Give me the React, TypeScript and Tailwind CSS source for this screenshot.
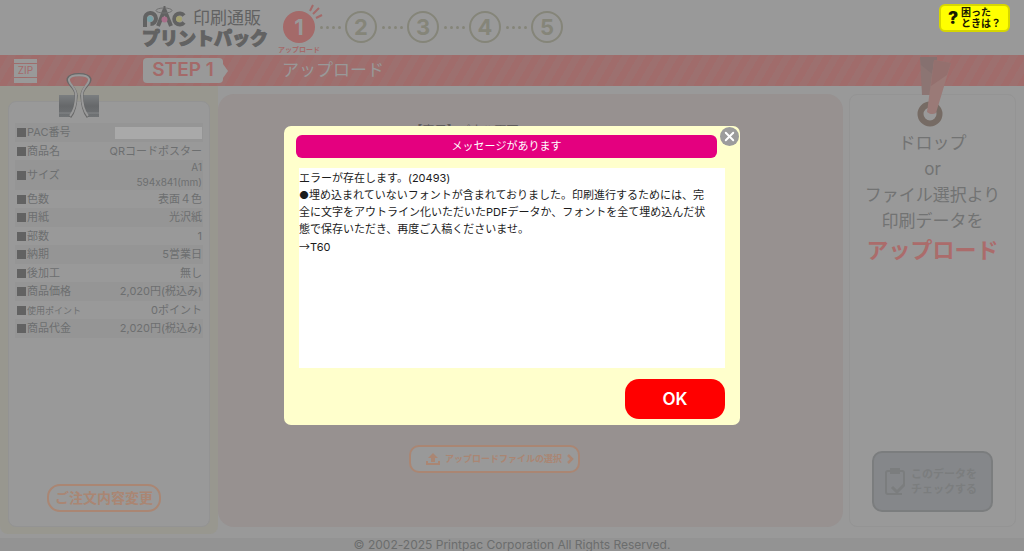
import { useState } from 'react'
import clsx from 'clsx'
import { X } from 'lucide-react'

type OrderRow = { label: string; value: string[]; small?: 'label' | 'value'; masked?: boolean }

const ORDER: OrderRow[] = [
  { label: 'PAC番号', value: [], masked: true },
  { label: '商品名', value: ['QRコードポスター'] },
  { label: 'サイズ', value: ['A1', '594x841(mm)'], small: 'value' },
  { label: '色数', value: ['表面４色'] },
  { label: '用紙', value: ['光沢紙'] },
  { label: '部数', value: ['1'] },
  { label: '納期', value: ['5営業日'] },
  { label: '後加工', value: ['無し'] },
  { label: '商品価格', value: ['2,020円(税込み)'] },
  { label: '使用ポイント', value: ['0ポイント'], small: 'label' },
  { label: '商品代金', value: ['2,020円(税込み)'] },
]

const MESSAGE = [
  'エラーが存在します。(20493)',
  '●埋め込まれていないフォントが含まれておりました。印刷進行するためには、完全に文字をアウトライン化いただいたPDFデータか、フォントを全て埋め込んだ状態で保存いただき、再度ご入稿くださいませ。',
]

function Logo() {
  return (
    <a href="#" aria-label="プリントパック" className="block w-[126px] pt-[6px] text-[#626262]">
      <span className="flex h-[22px] items-end gap-[7px]">
        <svg viewBox="0 0 44 22" className="h-[22px] w-[44px]" fill="none">
          <path d="M3 21V13a5.500 5.500 0 1 1 5.500 5" stroke="#626262" strokeWidth="4" />
          <path d="M16 20 22.500 4 29 20" stroke="#626262" strokeWidth="4" strokeLinejoin="round" />
          <ellipse cx="22" cy="4.500" rx="8" ry="2.500" stroke="#717171" />
          <path d="M22.500 0v5" stroke="#626262" strokeWidth="2" />
          <path d="M42 9.500a5.500 5.500 0 1 0 0 7" stroke="#626262" strokeWidth="4" />
          <circle cx="8" cy="13" r="3" fill="#78a0a6" />
          <circle cx="22.500" cy="13.500" r="3" fill="#a8708a" />
          <circle cx="37" cy="13" r="3" fill="#a3a070" />
        </svg>
        <span className="text-[17px] leading-[20px]">印刷通販</span>
      </span>
      <span className="block text-[18px] leading-[21px] font-black [-webkit-text-stroke:1px_#626262]">
        プリントパック
      </span>
    </a>
  )
}

function Steps() {
  return (
    <ol className="ml-[15px] flex pt-[11px]">
      {[1, 2, 3, 4, 5].map((n) => (
        <li key={n} className="flex">
          <span className="relative">
            <span
              className={clsx(
                'flex size-8 items-center justify-center rounded-full text-[22px] leading-none font-bold',
                n === 1 ? 'bg-[#a46a69] text-[#999999]' : 'border-2 border-[#858579] text-[#858579]',
              )}
            >
              {n}
            </span>
            {n === 1 && (
              <>
                <svg viewBox="0 0 16 16" className="absolute -top-[7px] left-[25px] size-4" stroke="#a46a69" strokeWidth="2">
                  <path d="M2 7 5 1M5 10 11 4M8 14 14 11" />
                </svg>
                <span className="absolute top-[34px] left-1/2 -translate-x-1/2 text-[7px] leading-[10px] font-bold whitespace-nowrap text-[#a46a69]">
                  アップロード
                </span>
              </>
            )}
          </span>
          {n < 5 && (
            <span className="flex w-[30px] items-center justify-center gap-[3px]">
              {[0, 1, 2, 3].map((d) => (
                <i key={d} className="size-[3px] rounded-full bg-[#858579]" />
              ))}
            </span>
          )}
        </li>
      ))}
    </ol>
  )
}

function StepBar() {
  return (
    <div className="flex h-[31px] items-center bg-[repeating-linear-gradient(120deg,#a06c6b_0px,#a06c6b_7px,#9d706f_7px,#9d706f_14px)]">
      <div className="ml-[14px] flex h-6 w-[23px] flex-col gap-px">
        <i className="h-[4px] bg-[#999999]" />
        <span className="bg-[#999999] text-center text-[10px] leading-[13px] text-[#a46a69]">ZIP</span>
        <i className="h-[5px] bg-[#999999]" />
      </div>
      <div className="ml-[106px] flex items-center">
        <span className="flex h-[25px] w-[80px] items-center justify-center rounded bg-[#999999] text-[19px] font-semibold text-[#a46a69]">
          STEP 1
        </span>
        <svg viewBox="0 0 5 14" className="h-[14px] w-[5px]" fill="#999999">
          <path d="M0 0 5 7 0 14z" />
        </svg>
      </div>
      <h1 className="ml-[54px] text-[17px] text-[#999999]">アップロード</h1>
    </div>
  )
}

function BinderClip() {
  return (
    <svg viewBox="0 0 40 46" className="absolute -top-[29px] left-[50px] h-[46px] w-[40px]" fill="none">
      <defs>
        <linearGradient id="clip" x1="0" y1="0" x2="0" y2="1">
          <stop offset="0" stopColor="#7b7e80" />
          <stop offset="0.500" stopColor="#66686a" />
          <stop offset="1" stopColor="#707375" />
        </linearGradient>
      </defs>
      <path d="M0 22h40v22H28L23 32 21 22h-2l-2 10-5 12H0z" fill="url(#clip)" />
      <path d="M0 40h13M27 40h13" stroke="#858789" strokeWidth="1" />
      <path d="M11 44C16 38 17 30 17 22 17 14 8 11 9 6c2-6 20-6 22 0 1 5-8 8-8 16 0 8 1 16 6 22" stroke="#686868" strokeWidth="3" />
      <path d="M11 43C16 37 17 30 17 22 17 14 9 11 10 6c2-5 18-5 20 0 1 5-7 8-7 16 0 8 1 15 6 21" stroke="#999999" strokeWidth="2" />
    </svg>
  )
}

function OrderPanel() {
  return (
    <aside className="mb-1 rounded-b-lg bg-[#98978f] px-2 pt-[15px] pb-[7px]">
      <div className="relative flex h-full flex-col rounded-lg border border-[#939393] bg-[#999999] px-[6px] pt-[21px] pb-[14px]">
        <BinderClip />
        <table className="w-full text-[11px] leading-[15px] text-[#6d6f70]">
          <tbody>
            {ORDER.map((row) => (
              <tr key={row.label} className="h-[18px] odd:h-[19px] odd:bg-[#959595]">
                <th scope="row" className="pl-[2px] text-left font-normal whitespace-nowrap">
                  <span className="flex items-center gap-px">
                    <i className="size-[9px] bg-[#626262]" />
                    <span className={clsx(row.small === 'label' && 'text-[9px]')}>{row.label}</span>
                  </span>
                </th>
                <td className={clsx('pr-px text-right whitespace-nowrap', row.small === 'value' && 'text-[10px]')}>
                  {row.masked && <span className="ml-auto block h-3 w-[87px] bg-[#a9a9a9]" />}
                  {row.value.map((line) => (
                    <div key={line}>{line}</div>
                  ))}
                </td>
              </tr>
            ))}
          </tbody>
        </table>
        <button className="mt-auto ml-8 h-7 w-[114px] rounded-[13px] border-2 border-[#aa8673] text-[14px] leading-none font-bold whitespace-nowrap text-[#aa8673]">
          ご注文内容変更
        </button>
      </div>
    </aside>
  )
}

function UploadPanel() {
  return (
    <section className="pt-2 pb-[11px]">
      <div className="flex h-full flex-col items-center rounded-2xl bg-[#979190] pt-[29px] pr-[72px] pb-[54px]">
        <h2 className="mr-[60px] text-[12px] leading-[16px] text-[#5f5c5c]">【専用】パネル画面</h2>
        <button className="mt-auto flex h-7 w-[171px] items-center justify-end gap-[5px] rounded-[10px] border-2 border-[#aa8673] bg-[#999999] pr-1 text-[9px] font-bold whitespace-nowrap text-[#aa8673]">
          <svg viewBox="0 0 14 12" className="h-3 w-[14px]" fill="#aa8673">
            <path d="M7 0 12 5H9v4H5V5H2zM0 8h2v2h10V8h2v4H0z" />
          </svg>
          アップロードファイルの選択
          <svg viewBox="0 0 7 10" className="h-[10px] w-[7px]" fill="none" stroke="#aa8673" strokeWidth="2.500">
            <path d="m1 1 4 4-4 4" />
          </svg>
        </button>
      </div>
    </section>
  )
}

function DropPanel() {
  return (
    <section className="pt-2 pr-2 pb-[11px] pl-[6px]">
      <div className="relative flex h-full flex-col items-center rounded-lg border border-[#949494] bg-[#999999] pt-[35px] pb-[14px] text-center">
        <svg viewBox="0 0 36 72" className="absolute -top-[39px] left-[66px] h-[72px] w-[36px]" fill="none">
          <circle cx="14" cy="58" r="9.500" stroke="#766b64" strokeWidth="6" />
          <path d="M4 1h17l-2 38H6z" fill="#8c7573" />
          <path d="M4 1h17l-1 20-15-12z" fill="#867170" />
          <path d="M18 4 35 7 20 57c-3 2-7 1-9-1z" fill="#9a7a77" />
          <path d="M18 4 35 7 31 19 15 30z" fill="#94706e" />
        </svg>
        <p className="text-[17px] leading-[26px] text-[#727373]">
          ドロップ
          <br />
          or
          <br />
          ファイル選択より
          <br />
          印刷データを
          <strong className="block text-[22px] leading-[32px] text-[#ab6c6b]">アップロード</strong>
        </p>
        <button
          disabled
          className="mt-auto flex h-[61px] w-[121px] items-center gap-[6px] rounded-[10px] border-2 border-[#7b7d7e] bg-[#85878a] pl-[11px] text-left text-[11px] leading-[15px] font-bold whitespace-nowrap text-[#7b7d7e]"
        >
          <svg viewBox="0 0 20 29" className="h-[29px] w-[20px]" fill="none" stroke="#7b7d7e" strokeWidth="2">
            <path d="M3 4h14a2 2 0 0 1 2 2v13M17 27H3a2 2 0 0 1-2-2V6a2 2 0 0 1 2-2" />
            <path d="M6 2h8v4H6z" fill="#7b7d7e" />
            <path d="m7 20 5 5 8-8" strokeWidth="3" />
          </svg>
          <span>
            このデータを
            <br />
            チェックする
          </span>
        </button>
      </div>
    </section>
  )
}

function MessageDialog({ onClose }: { onClose: () => void }) {
  return (
    <div className="fixed inset-0 flex items-center justify-center">
      <div
        role="dialog"
        aria-labelledby="dialog-title"
        className="relative flex w-[456px] flex-col rounded-[7px] bg-[#ffffcc] pt-[9px] pr-[15px] pb-[6px] pl-3 text-[11px] leading-[17px]"
      >
        <h2 id="dialog-title" className="mr-2 rounded-md bg-[#e4007f] py-[3px] text-center text-white">
          メッセージがあります
        </h2>
        <div className="mt-[10px] ml-[3px] h-[200px] overflow-auto bg-white pt-[2px] pr-3 text-[#1c1c1c]">
          {MESSAGE.map((line) => (
            <p key={line}>{line}</p>
          ))}
          <p>
            <span className="font-['Noto_Sans_CJK_JP',sans-serif]">→</span>T60
          </p>
        </div>
        <button onClick={onClose} className="mt-[11px] h-10 w-[100px] self-end rounded-[14px] bg-[#ff0000] text-[17px] font-semibold text-white">
          OK
        </button>
        <button
          onClick={onClose}
          aria-label="閉じる"
          className="absolute top-px right-px flex size-[19px] items-center justify-center rounded-full bg-[#9c9c9c] text-white"
        >
          <X size={15} strokeWidth={3} />
        </button>
      </div>
    </div>
  )
}

export default function App() {
  const [open, setOpen] = useState(true)

  return (
    <div className="flex min-h-screen flex-col bg-[#999999] font-['Inter','Noto_Sans_CJK_JP',sans-serif] [font-feature-settings:'calt'_0]">
      <header className="flex h-[55px] items-start pl-[142px]">
        <Logo />
        <Steps />
        <button className="mt-1 mr-[14px] ml-auto flex h-7 w-[71px] items-center justify-center gap-[3px] rounded-md border-2 border-[#d6d600] bg-[#ffff00] text-left text-[10px] leading-[11px] font-bold whitespace-nowrap text-[#1a1a00]">
          <span className="text-[17px] font-black">?</span>
          <span>
            困った
            <br />
            ときは？
          </span>
        </button>
      </header>
      <StepBar />
      <main className="grid grow grid-cols-[218px_1fr_181px]">
        <OrderPanel />
        <UploadPanel />
        <DropPanel />
      </main>
      <footer className="bg-[#939393] text-center text-[12px] leading-[13px] text-[#6b6d6d]">
        © 2002-2025 Printpac Corporation All Rights Reserved.
      </footer>
      {open && <MessageDialog onClose={() => setOpen(false)} />}
    </div>
  )
}
